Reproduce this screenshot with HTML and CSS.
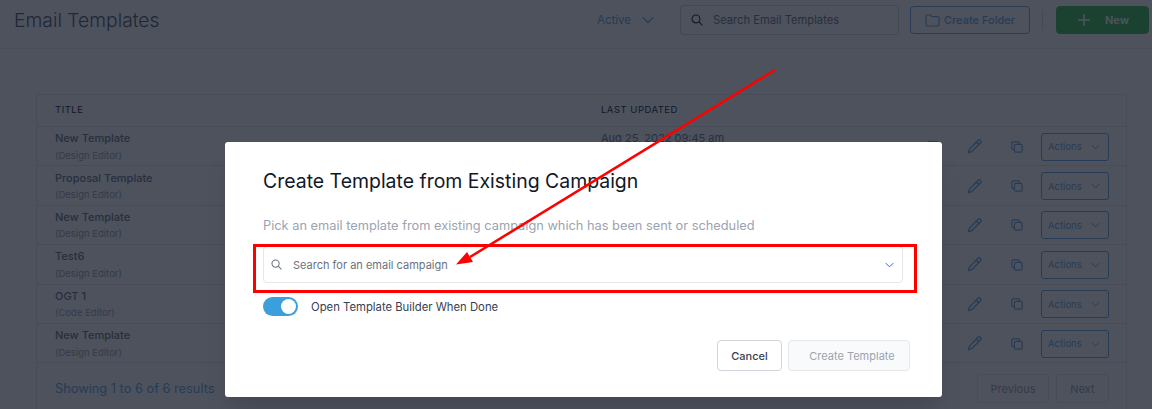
FILE: index.html
```html
<!DOCTYPE html>
<html lang="en">
<head>
    <meta charset="UTF-8">
    <meta name="viewport" content="width=device-width, initial-scale=1.0">
    <title>Email Templates</title>
    <link rel="stylesheet" href="styles.css">
</head>
<body>
    <svg class="icon-defs" width="0" height="0">
        <symbol id="i-pencil" viewBox="0 0 16 16"><path d="M11.6 1.6a1.9 1.9 0 0 1 2.7 2.7L5.2 13.4 1.6 14.4l1-3.6zM10 3.3l2.7 2.7" fill="none" stroke="currentColor" stroke-width="1.5" stroke-linejoin="round"/></symbol>
        <symbol id="i-copy" viewBox="0 0 14 14"><path d="M3.5 10H2.6A1.6 1.6 0 0 1 1 8.4V2.6A1.6 1.6 0 0 1 2.6 1h5.8A1.6 1.6 0 0 1 10 2.6v.9" fill="none" stroke="currentColor" stroke-width="1.4"/><rect x="4" y="4" width="9" height="9" rx="1.7" fill="none" stroke="currentColor" stroke-width="1.4"/></symbol>
        <symbol id="i-chev" viewBox="0 0 12 8"><path d="M1 1.5l5 5 5-5" fill="none" stroke="currentColor" stroke-width="1.3"/></symbol>
        <symbol id="i-search" viewBox="0 0 14 14"><circle cx="5.8" cy="5.8" r="4.6" fill="none" stroke="currentColor" stroke-width="1.3"/><path d="M9.2 9.2l4 4" stroke="currentColor" stroke-width="1.3"/></symbol>
    </svg>

    <div class="page">
        <header class="topbar">
            <h1>Email Templates</h1>
            <div class="status">Active <svg class="status-chev"><use href="#i-chev"/></svg></div>
            <div class="search-box">
                <svg class="search-icon"><use href="#i-search"/></svg>
                <span>Search Email Templates</span>
            </div>
            <button class="btn-folder">
                <svg width="15" height="13" viewBox="0 0 15 13"><path d="M1 2.4C1 1.6 1.6 1 2.4 1h3l1.5 1.7h5.700c.8 0 1.4.6 1.400 1.400v6.500c0 .8-.6 1.400-1.400 1.400H2.400C1.600 11.900 1 11.300 1 10.500z" fill="none" stroke="currentColor" stroke-width="1.200"/></svg>
                Create Folder
            </button>
            <span class="divider"></span>
            <button class="btn-new">
                <svg width="12" height="12" viewBox="0 0 12 12"><path d="M6 0v12M0 6h12" stroke="currentColor" stroke-width="1.500"/></svg>
                New
            </button>
        </header>

        <section class="card">
            <div class="row head-row">
                <div class="col-title">TITLE</div>
                <div class="col-date">LAST UPDATED</div>
            </div>
            <div class="row">
                <div class="col-title"><b>New Template</b><small>(Design Editor)</small></div>
                <div class="col-date">Aug 25, 2022 09:45 am</div>
                <span class="peek"></span>
                <div class="row-actions">
                    <svg class="pencil"><use href="#i-pencil"/></svg>
                    <svg class="copy"><use href="#i-copy"/></svg>
                    <button class="btn-actions">Actions <svg><use href="#i-chev"/></svg></button>
                </div>
            </div>
            <div class="row">
                <div class="col-title"><b>Proposal Template</b><small>(Design Editor)</small></div>
                <div class="row-actions">
                    <svg class="pencil"><use href="#i-pencil"/></svg>
                    <svg class="copy"><use href="#i-copy"/></svg>
                    <button class="btn-actions">Actions <svg><use href="#i-chev"/></svg></button>
                </div>
            </div>
            <div class="row">
                <div class="col-title"><b>New Template</b><small>(Design Editor)</small></div>
                <div class="row-actions">
                    <svg class="pencil"><use href="#i-pencil"/></svg>
                    <svg class="copy"><use href="#i-copy"/></svg>
                    <button class="btn-actions">Actions <svg><use href="#i-chev"/></svg></button>
                </div>
            </div>
            <div class="row">
                <div class="col-title"><b>Test6</b><small>(Design Editor)</small></div>
                <div class="row-actions">
                    <svg class="pencil"><use href="#i-pencil"/></svg>
                    <svg class="copy"><use href="#i-copy"/></svg>
                    <button class="btn-actions">Actions <svg><use href="#i-chev"/></svg></button>
                </div>
            </div>
            <div class="row">
                <div class="col-title"><b>OGT 1</b><small>(Code Editor)</small></div>
                <div class="row-actions">
                    <svg class="pencil"><use href="#i-pencil"/></svg>
                    <svg class="copy"><use href="#i-copy"/></svg>
                    <button class="btn-actions">Actions <svg><use href="#i-chev"/></svg></button>
                </div>
            </div>
            <div class="row">
                <div class="col-title"><b>New Template</b><small>(Design Editor)</small></div>
                <div class="row-actions">
                    <svg class="pencil"><use href="#i-pencil"/></svg>
                    <svg class="copy"><use href="#i-copy"/></svg>
                    <button class="btn-actions">Actions <svg><use href="#i-chev"/></svg></button>
                </div>
            </div>
            <div class="card-foot">
                <span class="showing">Showing 1 to 6 of 6 results</span>
                <button class="btn-page btn-prev">Previous</button>
                <button class="btn-page btn-next">Next</button>
            </div>
        </section>
    </div>

    <div class="overlay">
        <div class="modal">
            <h2>Create Template from Existing Campaign</h2>
            <p class="hint">Pick an email template from existing campaign which has been sent or scheduled</p>
            <div class="campaign-select">
                <svg class="campaign-search"><use href="#i-search"/></svg>
                <span>Search for an email campaign</span>
                <svg class="campaign-chev"><use href="#i-chev"/></svg>
            </div>
            <div class="toggle-row">
                <span class="toggle"><span class="knob"></span></span>
                <span>Open Template Builder When Done</span>
            </div>
            <div class="modal-foot">
                <button class="btn-cancel">Cancel</button>
                <button class="btn-create">Create Template</button>
            </div>
        </div>
    </div>

    <!-- red annotation drawn over the screenshot -->
    <div class="red-box"></div>
    <svg class="red-arrow" width="1152" height="409" viewBox="0 0 1152 409">
        <line x1="775" y1="70" x2="470" y2="257" stroke="#f00" stroke-width="2.500"/>
        <polygon points="456,264.500 467,252 473,262" fill="#f00"/>
    </svg>
</body>
</html>
```

FILE: styles.css
```css
* {
    box-sizing: border-box;
}
html, body {
    margin: 0;
    height: 409px;
    overflow: hidden;
}
body {
    font-family: Inter, "Noto Sans", sans-serif;
    background-color: #fff;
    color: #6b7280;
}
button {
    font-family: inherit;
    cursor: pointer;
}
.icon-defs {
    position: absolute;
}

/* page behind the modal */
.topbar {
    display: flex;
    align-items: center;
    height: 49px;
    padding: 0 3px 8px 14px;
    border-bottom: 1px solid #e5e7eb;
}
.topbar h1 {
    margin: 0 auto 0 0;
    font-size: 19.300px;
    font-weight: 300;
    line-height: 28px;
    color: #4b5563;
}
.status {
    display: flex;
    align-items: center;
    gap: 11px;
    margin-right: 26px;
    font-size: 11.500px;
    color: #6aa6dc;
}
.status-chev {
    width: 12px;
    height: 8px;
}
.search-box {
    display: flex;
    align-items: center;
    gap: 10px;
    width: 219px;
    height: 30px;
    padding-left: 10px;
    margin-right: 11px;
    border: 1px solid #d1d5db;
    border-radius: 3px;
    font-size: 11.200px;
    color: #6b7280;
}
.search-icon {
    width: 12px;
    height: 12px;
    color: #111827;
}
.btn-folder {
    display: flex;
    align-items: center;
    gap: 4px;
    width: 120px;
    height: 28px;
    padding: 0 0 0 14px;
    background: #fff;
    border: 1px solid #6aa6dc;
    border-radius: 4px;
    font-size: 11px;
    font-weight: 500;
    color: #6aa6dc;
}
.divider {
    width: 1px;
    height: 20px;
    margin: 0 13px 0 12px;
    background-color: #d1d5db;
}
.btn-new {
    display: flex;
    align-items: center;
    gap: 15px;
    width: 93px;
    height: 28px;
    padding: 0 0 0 21px;
    background-color: #38c050;
    border: 1px solid #38c050;
    border-radius: 4px;
    font-size: 11px;
    font-weight: 600;
    color: #fff;
}
.card {
    margin: 45px 25px 0 36px;
    height: 330px;
    border: 1px solid #e5e7eb;
    border-radius: 3px;
}
.row {
    position: relative;
    display: flex;
    align-items: center;
    height: 39.400px;
    padding-left: 18px;
    border-bottom: 1px solid #e5e7eb;
}
.head-row {
    height: 32px;
    padding-bottom: 2px;
    color: #111827;
}
.col-title {
    width: 546px;
    font-size: 11px;
}
.col-title b {
    display: block;
    font-weight: 500;
    line-height: 15px;
    padding-top: .5px;
}
.col-title small {
    display: block;
    margin-top: 2.500px;
    font-size: 9.500px;
    line-height: 13px;
    color: #9ca3af;
}
.col-date {
    font-size: 11px;
    align-self: flex-start;
    padding-top: 4px;
}
.head-row .col-title,
.head-row .col-date {
    font-size: 9.500px;
    letter-spacing: .5px;
    color: #111827;
}
.head-row .col-date {
    align-self: center;
    padding-top: 0;
}
.peek {
    position: absolute;
    left: 890px;
    top: 14px;
    width: 12px;
    height: 14px;
    border-radius: 2px;
    background-color: #6aa6dc;
}
.row-actions {
    display: flex;
    align-items: center;
    margin-left: auto;
    padding: 1px 17px 0 0;
    color: #6aa6dc;
}
.pencil {
    width: 15px;
    height: 15px;
    margin-right: 29px;
}
.copy {
    width: 12px;
    height: 12px;
    margin-right: 18px;
}
.btn-actions {
    display: flex;
    align-items: center;
    justify-content: space-between;
    width: 68px;
    height: 28px;
    padding: 0 8px 0 6px;
    background: #fff;
    border: 1px solid #6aa6dc;
    border-radius: 3px;
    font-size: 9.500px;
    color: #6aa6dc;
}
.btn-actions svg {
    width: 9px;
    height: 6px;
}
.card-foot {
    display: flex;
    align-items: center;
    padding: 11px 17px 0 18px;
}
.showing {
    margin-right: auto;
    font-size: 12.800px;
    color: #6aa6dc;
}
.btn-page {
    height: 29px;
    background: #fff;
    border: 1px solid #e5e7eb;
    border-radius: 3px;
    font-size: 11px;
    color: #9ca3af;
}
.btn-prev {
    width: 72px;
    margin-right: 7px;
}
.btn-next {
    width: 53px;
}

/* modal */
.overlay {
    position: absolute;
    inset: 0;
    padding: 142px 210px 0 225px;
    background-color: rgba(17, 24, 39, .75);
}
.modal {
    width: 717px;
    height: 255px;
    padding: 27px 32px 0 38px;
    background-color: #fff;
    border-radius: 3px;
    box-shadow: 0 20px 25px -5px rgba(0, 0, 0, .1), 0 10px 10px -5px rgba(0, 0, 0, .04);
}
.modal h2 {
    margin: 0;
    font-size: 19.450px;
    font-weight: 400;
    line-height: 24px;
    color: #111827;
}
.hint {
    margin: 23px 0 0;
    font-size: 12.800px;
    line-height: 20px;
    color: #9ca3af;
}
.campaign-select {
    display: flex;
    align-items: center;
    width: 640px;
    height: 37px;
    margin-top: 10px;
    padding: 0 8px 0 7px;
    border: 1px solid #e5e7eb;
    border-radius: 4px;
    font-size: 11px;
    color: #6b7280;
}
.campaign-search {
    width: 11px;
    height: 11px;
    margin-right: 11px;
}
.campaign-chev {
    width: 9px;
    height: 6px;
    margin-left: auto;
    color: #2563eb;
}
.toggle-row {
    display: flex;
    align-items: center;
    gap: 13px;
    margin-top: 14px;
    font-size: 11.300px;
    color: #374151;
}
.toggle {
    display: flex;
    justify-content: flex-end;
    align-items: center;
    width: 35px;
    height: 19px;
    padding-right: 2px;
    background-color: #3b9fdc;
    border-radius: 10px;
}
.knob {
    width: 15px;
    height: 15px;
    background-color: #fff;
    border-radius: 50%;
}
.modal-foot {
    display: flex;
    justify-content: flex-end;
    gap: 6px;
    margin-top: 24px;
}
.btn-cancel {
    width: 65px;
    height: 31px;
    background: #fff;
    border: 1px solid #d1d5db;
    border-radius: 4px;
    font-size: 11px;
    font-weight: 500;
    color: #374151;
}
.btn-create {
    width: 122px;
    height: 31px;
    padding-left: 12px;
    background-color: #f9fafb;
    border: 1px solid #e5e7eb;
    border-radius: 4px;
    font-size: 11px;
    font-weight: 400;
    color: #9ca3af;
}

/* annotation */
.red-box {
    position: absolute;
    left: 253px;
    top: 244px;
    width: 664px;
    height: 49px;
    border: 3px solid #f00;
}
.red-arrow {
    position: absolute;
    left: 0;
    top: 0;
}
```
